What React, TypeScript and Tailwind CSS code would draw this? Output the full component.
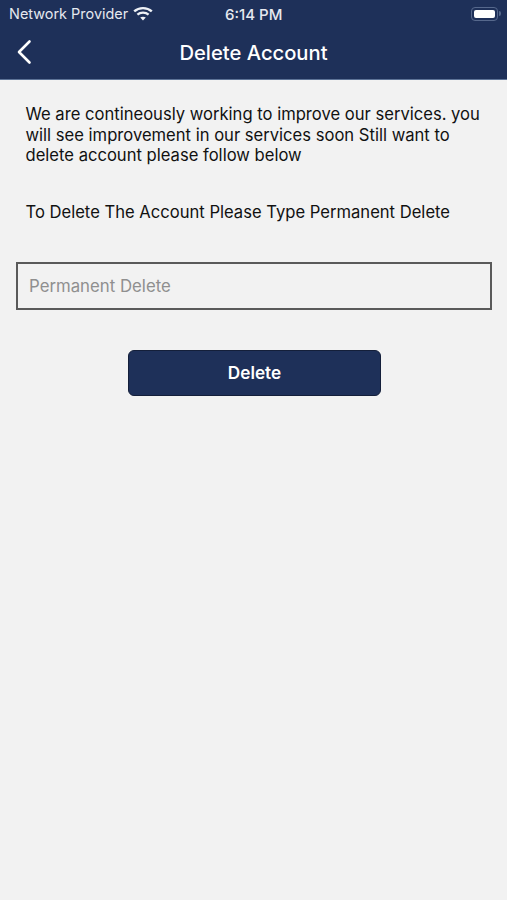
import React from 'react'

function Wifi() {
  return (
    <svg width="20" height="15" viewBox="0 0 20 15" fill="none" stroke="#eef1f6" strokeLinecap="butt">
      <path d="M1.2 5.4C6 1 14 1 18.8 5.4" strokeWidth="2.4" />
      <path d="M4.4 8.6C7.4 6 12.6 6 15.6 8.6" strokeWidth="2.3" />
      <path d="M10 14.5L7.2 11.6C8.8 10.4 11.2 10.4 12.8 11.6Z" fill="#eef1f6" stroke="none" />
    </svg>
  )
}

function Battery() {
  return (
    <div className="flex items-center gap-[1px]">
      <div className="w-[27px] h-[14px] rounded-[4px] border border-[#56688c] p-[2px]">
        <div className="w-full h-full rounded-[2px] bg-white" />
      </div>
      <div className="w-[2px] h-[5px] rounded-r-sm bg-[#56688c]" />
    </div>
  )
}

function App() {
  return (
    <div className="min-h-[900px] bg-[#f2f2f2] font-['Inter',sans-serif]">
      <div className="h-[80px] bg-[#1e3059] border-b border-[#5d7397] text-white">
        <div className="relative h-[27px] pl-[9px] pr-[6px] flex items-center justify-between text-[#e6e9ef]">
          <div className="flex items-center gap-[5px] text-[14.45px]">
            <span>Network Provider</span>
            <Wifi />
          </div>
          <span className="absolute left-[225px] top-[4px] text-[15px] font-medium">6:14 PM</span>
          <Battery />
        </div>
        <div className="relative h-[52px] flex items-center justify-center">
          <svg className="absolute left-[16px] top-[12px]" width="16" height="26" viewBox="0 0 16 26" fill="none" stroke="#ffffff" strokeWidth="2.6" strokeLinecap="round" strokeLinejoin="round">
            <path d="M13.5 2.5L3 13L13.5 23.5" />
          </svg>
          <h1 className="text-[20.2px] font-medium">Delete Account</h1>
        </div>
      </div>

      <div className="pt-[24px] pl-[25.5px] pr-[20px] text-[#111111] text-[16.6px] leading-[20.5px]">
        <p>We are contineously working to improve our services. you will see improvement in our services soon Still want to delete account please follow below</p>
        <p className="mt-[36px]">To Delete The Account Please Type Permanent Delete</p>
      </div>

      <div className="mt-[40px] pl-[16px]">
        <input
          placeholder="Permanent Delete"
          className="w-[476px] h-[48px] px-[11px] bg-transparent border-2 border-[#5a5a5a] text-[16.8px] placeholder:text-[#8f8f8f] outline-none"
        />
      </div>

      <div className="mt-[40px] pl-[128px]">
        <button className="w-[253px] h-[46px] rounded-[6px] bg-[#1e3059] border border-[#141f3a] text-white text-[17.2px] font-semibold">
          Delete
        </button>
      </div>
    </div>
  )
}

export default App
